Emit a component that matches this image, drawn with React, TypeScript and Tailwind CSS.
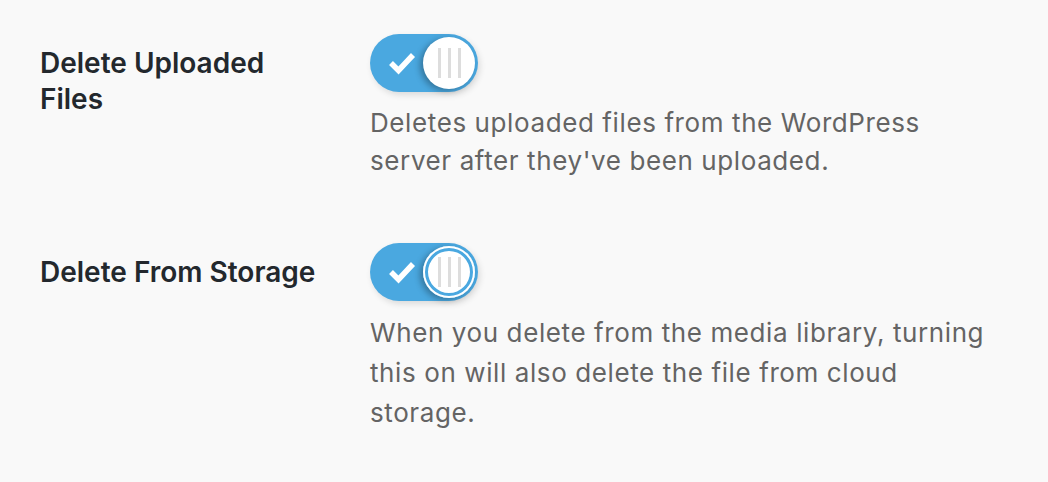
const font = { fontFamily: "Inter, 'Noto Sans', sans-serif" };

type ToggleProps = { focused?: boolean };

const Toggle = ({ focused }: ToggleProps) => {
  return (
    <div className="w-[108px] h-[58px] rounded-full bg-[#4aa8e0] p-[3px] flex items-center justify-between shadow-[2px_3px_6px_rgba(0,0,0,0.12)]">
      <svg width="27" height="24" viewBox="0 0 27 24" className="ml-[16px]">
        <polyline
          points="2,12 9.5,19.5 24,4"
          fill="none"
          stroke="white"
          strokeWidth="5.5"
          strokeLinecap="butt"
          strokeLinejoin="miter"
        />
      </svg>
      <div
        className={
          focused
            ? "w-[52px] h-[52px] rounded-full bg-white flex items-center justify-center gap-[7px] shadow-[inset_0_0_0_2px_#ffffff,inset_0_0_0_5px_#4aa8e0,-3px_2px_6px_rgba(0,0,0,0.3)]"
            : "w-[52px] h-[52px] rounded-full bg-white flex items-center justify-center gap-[7px] shadow-[-3px_2px_6px_rgba(0,0,0,0.3)]"
        }
      >
        <span className="w-[3px] h-[30px] bg-[#dddddd]" />
        <span className="w-[3px] h-[30px] bg-[#dddddd]" />
        <span className="w-[3px] h-[30px] bg-[#dddddd]" />
      </div>
    </div>
  );
};

type RowProps = {
  label: string;
  description: string;
  focused?: boolean;
  leading: string;
};

const SettingRow = ({ label, description, focused, leading }: RowProps) => {
  return (
    <div className="flex">
      <div className="w-[330px] shrink-0 pt-[11px] pr-[45px]">
        <h3 className="text-[28px] leading-[36px] font-semibold text-[#23282d]">
          {label}
        </h3>
      </div>
      <div className="flex flex-col">
        <Toggle focused={focused} />
        <p
          className={`mt-[12px] w-[625px] text-[26px] tracking-[0.6px] text-[#646464] ${leading}`}
        >
          {description}
        </p>
      </div>
    </div>
  );
};

export default function App() {
  return (
    <div
      className="min-h-screen w-full bg-[#f9f9f9] pl-[40px] pt-[34px]"
      style={font}
    >
      <div className="flex flex-col gap-[63px]">
        <SettingRow
          label="Delete Uploaded Files"
          description="Deletes uploaded files from the WordPress server after they've been uploaded."
          leading="leading-[38px]"
        />
        <SettingRow
          label="Delete From Storage"
          description="When you delete from the media library, turning this on will also delete the file from cloud storage."
          focused
          leading="leading-[40px]"
        />
      </div>
    </div>
  );
}
